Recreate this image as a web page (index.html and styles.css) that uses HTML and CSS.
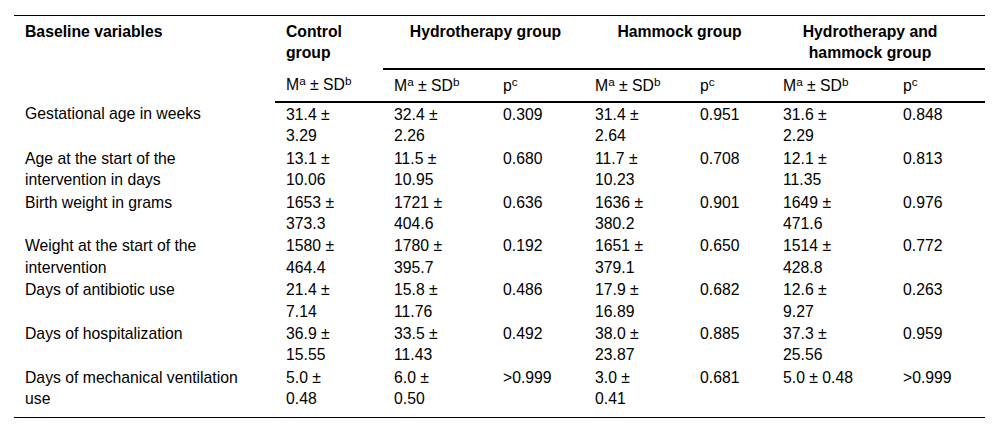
FILE: index.html
```html
<!DOCTYPE html>
<html lang="en">
<head>
<meta charset="utf-8">
<title>Baseline variables</title>
<link rel="stylesheet" href="styles.css">
</head>
<body>
<div class="wrap">
<table class="data">
  <colgroup>
    <col class="c-var">
    <col class="c-ctrl">
    <col class="c-hm">
    <col class="c-hp">
    <col class="c-am">
    <col class="c-ap">
    <col class="c-bm">
    <col class="c-bp">
  </colgroup>
  <thead>
    <tr class="head1">
      <th class="left" rowspan="2">Baseline variables</th>
      <th class="left">Control group</th>
      <th class="grp g-hydro" colspan="2">Hydrotherapy group</th>
      <th class="grp g-ham" colspan="2">Hammock group</th>
      <th class="grp g-both" colspan="2">Hydrotherapy and hammock group</th>
    </tr>
    <tr class="head2">
      <th>M<sup>a</sup> ± SD<sup>b</sup></th>
      <th>M<sup>a</sup> ± SD<sup>b</sup></th>
      <th>p<sup>c</sup></th>
      <th>M<sup>a</sup> ± SD<sup>b</sup></th>
      <th>p<sup>c</sup></th>
      <th>M<sup>a</sup> ± SD<sup>b</sup></th>
      <th>p<sup>c</sup></th>
    </tr>
  </thead>
  <tbody>
    <tr>
      <td>Gestational age in weeks</td>
      <td>31.4 ± 3.29</td><td>32.4 ± 2.26</td><td>0.309</td>
      <td>31.4 ± 2.64</td><td>0.951</td><td class="bm">31.6 ± 2.29</td><td>0.848</td>
    </tr>
    <tr>
      <td>Age at the start of the intervention in days</td>
      <td>13.1 ± 10.06</td><td>11.5 ± 10.95</td><td>0.680</td>
      <td>11.7 ± 10.23</td><td>0.708</td><td class="bm">12.1 ± 11.35</td><td>0.813</td>
    </tr>
    <tr>
      <td>Birth weight in grams</td>
      <td>1653 ± 373.3</td><td>1721 ± 404.6</td><td>0.636</td>
      <td>1636 ± 380.2</td><td>0.901</td><td class="bm">1649 ± 471.6</td><td>0.976</td>
    </tr>
    <tr>
      <td>Weight at the start of the intervention</td>
      <td>1580 ± 464.4</td><td>1780 ± 395.7</td><td>0.192</td>
      <td>1651 ± 379.1</td><td>0.650</td><td class="bm">1514 ± 428.8</td><td>0.772</td>
    </tr>
    <tr>
      <td>Days of antibiotic use</td>
      <td>21.4 ± 7.14</td><td>15.8 ± 11.76</td><td>0.486</td>
      <td>17.9 ± 16.89</td><td>0.682</td><td class="bm">12.6 ± 9.27</td><td>0.263</td>
    </tr>
    <tr>
      <td>Days of hospitalization</td>
      <td>36.9 ± 15.55</td><td>33.5 ± 11.43</td><td>0.492</td>
      <td>38.0 ± 23.87</td><td>0.885</td><td class="bm">37.3 ± 25.56</td><td>0.959</td>
    </tr>
    <tr class="last">
      <td>Days of mechanical ventilation use</td>
      <td>5.0 ± 0.48</td><td>6.0 ± 0.50</td><td>&gt;0.999</td>
      <td>3.0 ± 0.41</td><td>0.681</td><td class="bm">5.0 ± 0.48</td><td>&gt;0.999</td>
    </tr>
  </tbody>
</table>
</div>
</body>
</html>
```

FILE: styles.css
```css
html, body {
  margin: 0;
  padding: 0;
  background: #ffffff;
}

.wrap {
  padding: 15px 15px 0 14px;
}

.data {
  width: 971px;
  table-layout: fixed;
  border-collapse: collapse;
  font-family: "Liberation Sans", Arial, sans-serif;
  font-size: 15.75px;
  line-height: 21px;
  color: #000;
  border-top: 1px solid #000;
  border-bottom: 1px solid #000;
}

.c-var { width: 261px; }
.c-ctrl { width: 108px; }
.c-hm { width: 109px; }
.c-hp { width: 92px; }
.c-am { width: 105px; }
.c-ap { width: 83px; }
.c-bm { width: 120px; }
.c-bp { width: 93px; }

.data th {
  text-align: left;
  vertical-align: top;
  padding: 5px 8px 5px 11px;
}

.head1 th {
  font-weight: bold;
}

.head1 .left {
  padding-right: 30px;
}

.head1 .grp {
  text-align: center;
  border-bottom: 2px solid #000;
}

.head1 .g-hydro { padding-right: 7px; }
.head1 .g-ham { padding-right: 8px; }
.head1 .g-both { padding-right: 28px; }

.head2 th {
  font-weight: normal;
  border-bottom: 2px solid #000;
}

.data sup {
  font-size: 0.75em;
  line-height: 0;
  vertical-align: 0.45em;
}

.data td {
  vertical-align: top;
  line-height: 21.4px;
  padding: 1px 30px 0 11px;
}

.data td.bm {
  padding-right: 36px;
}

.data tr.last td {
  padding-bottom: 7.5px;
}
```
